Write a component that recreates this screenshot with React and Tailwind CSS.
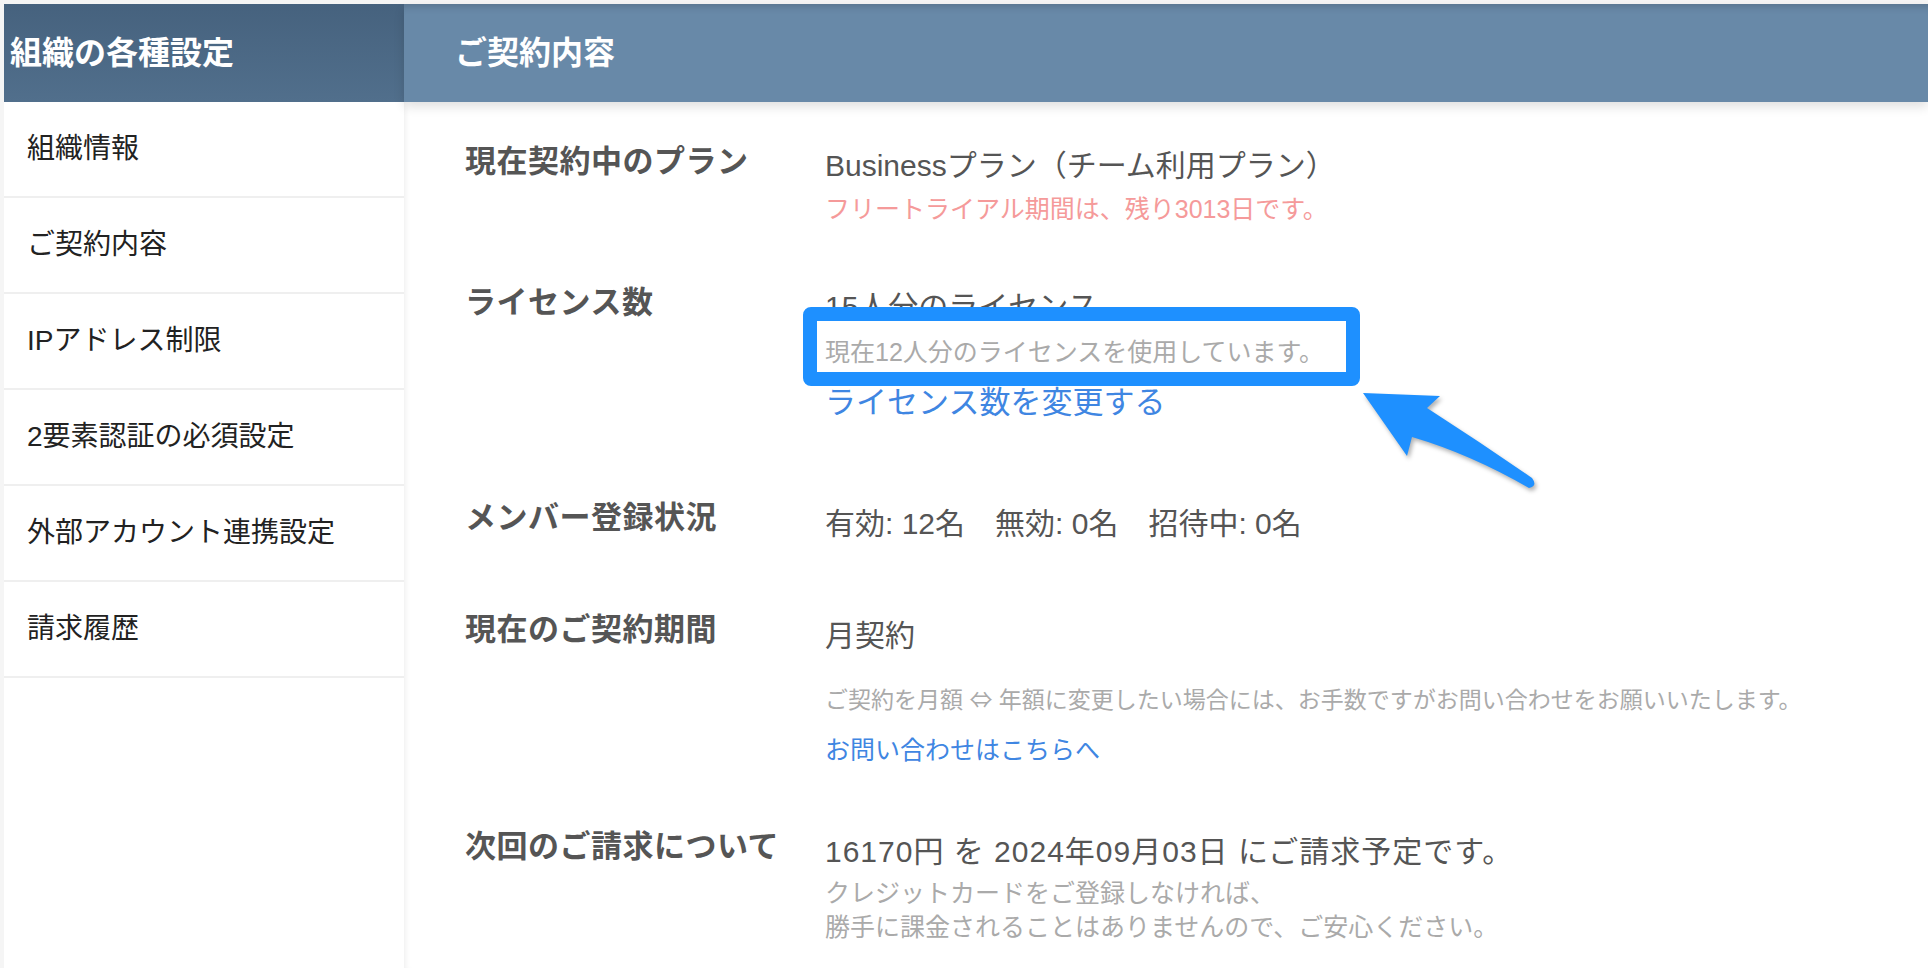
const menuItems = [
  '組織情報',
  'ご契約内容',
  'IPアドレス制限',
  '2要素認証の必須設定',
  '外部アカウント連携設定',
  '請求履歴',
];

function Label({ children }) {
  return (
    <div className="w-[360px] shrink-0 text-[31px] leading-[44px] font-bold text-[#555] tracking-[0.5px]">
      {children}
    </div>
  );
}

function HighlightArrow() {
  return (
    <svg
      className="absolute left-[1350px] top-[380px] drop-shadow-[2px_3px_2px_rgba(0,0,0,0.3)]"
      width="200"
      height="120"
      viewBox="0 0 200 120"
    >
      <path
        d="M13,13 L90,16 L77,28 Q130,62 182,98 Q188,106 179,108 Q120,74 62,57 L57,76 Z"
        fill="#1e90ff"
      />
    </svg>
  );
}

export default function App() {
  return (
    <div
      className="relative flex w-[1928px] h-[968px] overflow-hidden bg-[#f5f5f5] pt-[4px] pl-[4px]"
      style={{ fontFamily: '"Liberation Sans", "Noto Sans CJK JP", sans-serif' }}
    >
      {/* sidebar */}
      <aside className="w-[400px] shrink-0 flex flex-col bg-white">
        <div className="h-[98px] flex items-center pl-[6px] bg-gradient-to-b from-[#46627e] to-[#516f8c]">
          <h1 className="text-[32px] font-bold text-white leading-none">組織の各種設定</h1>
        </div>
        {menuItems.map((item) => (
          <div
            key={item}
            className="h-[96px] flex items-center pl-[23px] border-b-[2px] border-[#efefef] text-[28px] text-[#222]"
          >
            {item}
          </div>
        ))}
      </aside>

      {/* main */}
      <main className="flex-1 flex flex-col bg-white shadow-[inset_6px_0_6px_-5px_rgba(0,0,0,0.08)]">
        <div className="relative z-10 h-[98px] flex items-center pl-[51px] bg-[#6889a8] shadow-[inset_0_10px_8px_-8px_rgba(0,0,0,0.18),0_5px_10px_rgba(0,0,0,0.12)]">
          <h2 className="text-[32px] font-bold text-white leading-none">ご契約内容</h2>
        </div>

        <div className="flex flex-col pl-[61px] pt-[38px]">
          <div className="flex items-start">
            <Label>現在契約中のプラン</Label>
            <div className="pt-[4px] flex flex-col">
              <div className="text-[30px] leading-[44px] text-[#555]">Businessプラン（チーム利用プラン）</div>
              <div className="mt-[1px] text-[25px] leading-[40px] text-[#f59a9a]">
                フリートライアル期間は、残り3013日です。
              </div>
            </div>
          </div>

          <div className="flex items-start mt-[52px]">
            <Label>ライセンス数</Label>
            <div className="pt-[4px] flex flex-col">
              <div className="text-[30px] leading-[44px] text-[#555]">15人分のライセンス</div>
              <div className="mt-[5px] text-[25px] leading-[36px] text-[#aaa]">
                現在12人分のライセンスを使用しています。
              </div>
              <a className="mt-[11px] text-[31px] leading-[44px] text-[#3f86e2]">ライセンス数を変更する</a>
            </div>
          </div>

          <div className="flex items-start mt-[71px]">
            <Label>メンバー登録状況</Label>
            <div className="pt-[6px] text-[30px] leading-[44px] text-[#555]">
              <span>有効: 12名</span>
              <span className="ml-[30px]">無効: 0名</span>
              <span className="ml-[30px]">招待中: 0名</span>
            </div>
          </div>

          <div className="flex items-start mt-[62px]">
            <Label>現在のご契約期間</Label>
            <div className="pt-[6px] flex flex-col">
              <div className="text-[30px] leading-[44px] text-[#555]">月契約</div>
              <div className="mt-[22px] text-[23px] leading-[36px] text-[#aaa] whitespace-nowrap">
                ご契約を月額 <span style={{ fontFamily: '"Noto Sans CJK JP", sans-serif' }}>⇔</span> 年額に変更したい場合には、お手数ですがお問い合わせをお願いいたします。
              </div>
              <a className="mt-[14px] text-[25px] leading-[36px] text-[#3f86e2]">お問い合わせはこちらへ</a>
            </div>
          </div>

          <div className="flex items-start mt-[57px]">
            <Label>次回のご請求について</Label>
            <div className="pt-[5px] flex flex-col">
              <div className="text-[30px] leading-[44px] text-[#555] tracking-[1px]">
                16170円 を 2024年09月03日 にご請求予定です。
              </div>
              <div className="mt-[2px] text-[25px] leading-[34px] text-[#aaa]">
                クレジットカードをご登録しなければ、
                <br />
                勝手に課金されることはありませんので、ご安心ください。
              </div>
            </div>
          </div>
        </div>
      </main>

      {/* annotation overlay */}
      <div className="absolute left-[803px] top-[307px] w-[557px] h-[79px] border-[14px] border-[#1e90ff] rounded-[8px] z-20" />
      <div className="absolute inset-0 z-20 pointer-events-none">
        <HighlightArrow />
      </div>
    </div>
  );
}
